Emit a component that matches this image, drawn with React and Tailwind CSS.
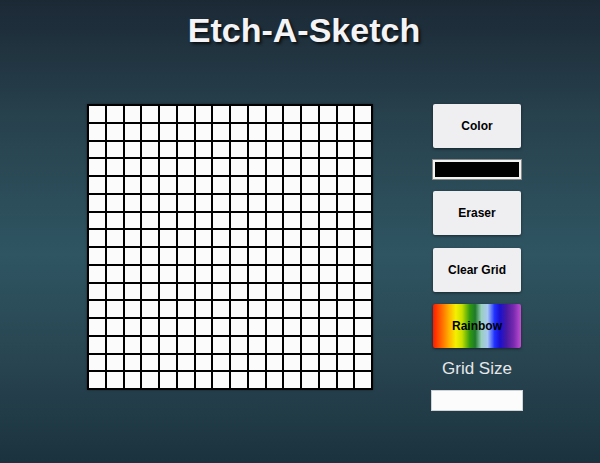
import { useState } from 'react';

const SIZE = 16;

export default function App() {
  const [cells, setCells] = useState(Array(SIZE * SIZE).fill('#fcfbfc'));

  const paint = (i) => {
    const next = [...cells];
    next[i] = '#000000';
    setCells(next);
  };

  const btn =
    'w-[88px] h-[44px] bg-[#efeef1] rounded-[2px] shadow-[0_1px_3px_rgba(0,0,0,0.5)] text-[12px] font-bold text-black flex items-center justify-center';

  return (
    <div
      className="w-[600px] h-[463px] overflow-hidden bg-[linear-gradient(to_bottom,#1b2935_0%,#27414d_25%,#2f5562_55%,#27434f_80%,#1a323e_100%)]"
      style={{ fontFamily: '"Liberation Sans", Arial, sans-serif' }}
    >
      <h1 className="pt-[10px] text-center text-[34px] leading-[40px] font-bold text-[#f4f4f6] [text-shadow:2px_2px_3px_rgba(0,0,0,0.7)] pl-[8px]">
        Etch-A-Sketch
      </h1>

      <div className="mt-[54px] flex justify-center items-start gap-[58px] pl-[10px]">
        {/* drawing grid */}
        <div className="w-[286px] h-[286px] border-2 border-black bg-black grid grid-cols-16 gap-[2px] shadow-[0_0_2px_rgba(0,0,0,0.5)]">
          {cells.map((c, i) => (
            <div key={i} onMouseOver={() => paint(i)} style={{ backgroundColor: c }} />
          ))}
        </div>

        {/* controls */}
        <div className="w-[92px] flex flex-col items-center">
          <button className={btn}>Color</button>
          <div className="mt-[12px] w-[88px] h-[19px] bg-black border-2 border-[#f2f2f2] outline outline-1 outline-[#8a8a8a]" />
          <button className={`${btn} mt-[12px]`}>Eraser</button>
          <button className={`${btn} mt-[13px]`}>Clear Grid</button>
          <button
            className={`${btn} mt-[12px] bg-[linear-gradient(to_right,#ff1a00_0%,#ff6a00_10%,#ffb000_18%,#f5f000_26%,#c8e000_33%,#2f9a10_42%,#1f7a2a_48%,#9ad0c0_55%,#a8c8f0_62%,#2030ff_70%,#1a10d0_76%,#4a1aa0_84%,#7a2ab0_92%,#c050d0_100%)]`}
          >
            Rainbow
          </button>
          <div className="mt-[11px] text-[17px] leading-[20px] text-[#e6e8ea]">Grid Size</div>
          <input
            type="text"
            className="mt-[11px] w-[92px] h-[21px] bg-[#fcfcfd] border border-[#cfd3d6] outline-none"
          />
        </div>
      </div>
    </div>
  );
}
